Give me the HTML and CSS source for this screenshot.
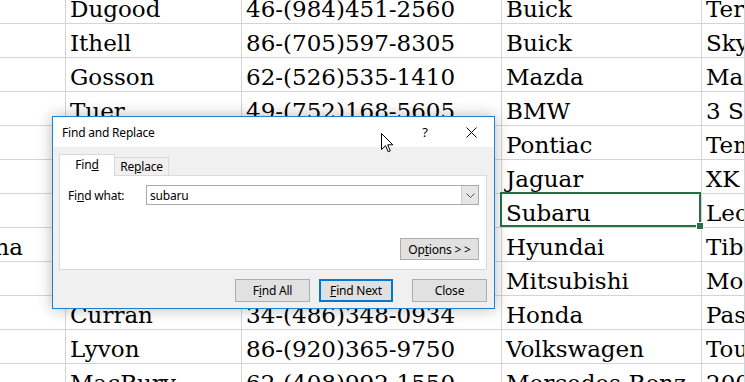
FILE: index.html
```html
<!DOCTYPE html>
<html lang="en">
<head>
  <meta charset="UTF-8" />
  <title>Find and Replace</title>
  <link rel="stylesheet" href="styles.css">
</head>
<body>
  <div class="sheet">
    <div class="row"><div class="cell"></div><div class="cell">Dugood</div><div class="cell">46-(984)451-2560</div><div class="cell">Buick</div><div class="cell">Terraza</div></div>
    <div class="row"><div class="cell"></div><div class="cell">Ithell</div><div class="cell">86-(705)597-8305</div><div class="cell">Buick</div><div class="cell">Skylark</div></div>
    <div class="row"><div class="cell"></div><div class="cell">Gosson</div><div class="cell">62-(526)535-1410</div><div class="cell">Mazda</div><div class="cell">Mazda6</div></div>
    <div class="row"><div class="cell"></div><div class="cell">Tuer</div><div class="cell">49-(752)168-5605</div><div class="cell">BMW</div><div class="cell">3 Series</div></div>
    <div class="row"><div class="cell"></div><div class="cell">Pinkney</div><div class="cell">55-(310)204-7781</div><div class="cell">Pontiac</div><div class="cell">Tempest</div></div>
    <div class="row"><div class="cell"></div><div class="cell">Aldin</div><div class="cell">7-(912)843-1127</div><div class="cell">Jaguar</div><div class="cell">XK</div></div>
    <div class="row"><div class="cell"></div><div class="cell">Bewick</div><div class="cell">63-(221)660-4390</div><div class="cell selected">Subaru</div><div class="cell">Leone</div></div>
    <div class="row"><div class="cell spill">Natasha</div><div class="cell">Ormerod</div><div class="cell">33-(418)275-0563</div><div class="cell">Hyundai</div><div class="cell">Tiburon</div></div>
    <div class="row"><div class="cell"></div><div class="cell">Kenward</div><div class="cell">86-(654)112-9078</div><div class="cell">Mitsubishi</div><div class="cell">Montero</div></div>
    <div class="row"><div class="cell"></div><div class="cell">Curran</div><div class="cell">34-(486)348-0934</div><div class="cell">Honda</div><div class="cell">Passport</div></div>
    <div class="row"><div class="cell"></div><div class="cell">Lyvon</div><div class="cell">86-(920)365-9750</div><div class="cell">Volkswagen</div><div class="cell">Touareg</div></div>
    <div class="row"><div class="cell"></div><div class="cell">MacBury</div><div class="cell">62-(408)992-1550</div><div class="cell">Mercedes-Benz</div><div class="cell">200</div></div>
  </div>

  <div class="dialog">
    <div class="dlg-title">
      <span>Find and Replace</span>
      <span class="cap-btn help">?</span>
      <span class="cap-btn close">
        <svg width="11" height="11" viewBox="0 0 11 11"><path d="M0.5 0.5 L10.5 10.5 M10.5 0.5 L0.5 10.5" stroke="#000" stroke-width="1"/></svg>
      </span>
    </div>
    <div class="dlg-body">
      <div class="tabs">
        <div class="tab active">Fin<u>d</u></div>
        <div class="tab">Re<u>p</u>lace</div>
      </div>
      <div class="panel">
        <div class="find-row">
          <label class="find-label">Fi<u>n</u>d what:</label>
          <div class="combo">
            <span class="combo-text">subaru</span>
            <span class="combo-btn">
              <svg width="9" height="5" viewBox="0 0 9 5"><path d="M0.5 0.5 L4.5 4.5 L8.5 0.5" fill="none" stroke="#555" stroke-width="1"/></svg>
            </span>
          </div>
        </div>
        <div class="options-row">
          <button class="btn options">Op<u>t</u>ions &gt; &gt;</button>
        </div>
      </div>
      <div class="actions">
        <button class="btn">F<u>i</u>nd All</button>
        <button class="btn default"><u>F</u>ind Next</button>
        <button class="btn close-btn">Close</button>
      </div>
    </div>
  </div>

  <svg class="cursor" width="13" height="20" viewBox="0 0 13 20">
    <path d="M0.5 0.5 L0.5 16.5 L4.5 12.7 L7.2 18.8 L9.3 17.9 L6.7 11.8 L11.8 11.8 Z" fill="#fff" stroke="#000" stroke-width="1" stroke-linejoin="round"/>
  </svg>
</body>
</html>
```

FILE: styles.css
```css
* { box-sizing: border-box; }
body {
  margin: 0;
  background: #fff;
  overflow: hidden;
  height: 382px;
  position: relative;
}

/* spreadsheet behind the dialog */
.sheet {
  margin-top: -10px;
  font-family: "DejaVu Serif", serif;
  font-size: 23px;
  color: #000;
}
.row {
  display: grid;
  grid-template-columns: 66px 176px 260px 200px 1fr;
  height: 34px;
}
.cell {
  position: relative;
  border-right: 1px solid #d4d4d4;
  border-bottom: 1px solid #d4d4d4;
  padding: 5px 0 0 4px;
  line-height: 28px;
  white-space: nowrap;
  overflow: hidden;
}
.cell.spill {
  display: flex;
  justify-content: flex-end;
  padding-right: 42px;
  border-right-color: transparent;
}
.cell.selected {
  overflow: visible;
}
.cell.selected::after {
  content: "";
  position: absolute;
  top: -2px;
  left: -2px;
  right: 0;
  bottom: 0;
  border: 2px solid #217346;
}
.cell.selected::before {
  content: "";
  position: absolute;
  right: -3px;
  bottom: -3px;
  width: 6px;
  height: 6px;
  background: #217346;
  border: 1px solid #fff;
  z-index: 2;
}

/* find and replace dialog */
.dialog {
  position: absolute;
  left: 52px;
  top: 116px;
  width: 443px;
  height: 193px;
  border: 1px solid #1883d7;
  background: #f0f0f0;
  box-shadow: 0 0 14px rgba(0, 0, 0, 0.28);
  font-family: "Noto Sans", sans-serif;
  font-size: 12px;
  letter-spacing: -0.2px;
  color: #000;
  display: flex;
  flex-direction: column;
}
.dlg-title {
  height: 30px;
  background: #fff;
  display: flex;
  align-items: center;
  padding-left: 9px;
}
.cap-btn {
  width: 46px;
  height: 30px;
  display: flex;
  align-items: center;
  justify-content: center;
}
.help {
  margin-left: auto;
  font-size: 13px;
}
.dlg-body {
  flex: 1;
  padding: 7px 7px 0 6px;
}
.tabs {
  display: flex;
  align-items: flex-end;
  height: 21px;
}
.tab {
  height: 18px;
  width: 55px;
  margin-left: -1px;
  border: 1px solid #d9d9d9;
  border-bottom: none;
  background: #f0f0f0;
  text-align: center;
  line-height: 17px;
}
.tab.active {
  position: relative;
  z-index: 1;
  margin-left: 0;
  width: 56px;
  height: 22px;
  margin-bottom: -1px;
  background: #fff;
  line-height: 20px;
}
.panel {
  height: 95px;
  width: 428px;
  background: #fff;
  border: 1px solid #d9d9d9;
  padding: 9px 7px 0 8px;
}
.find-row {
  display: flex;
  align-items: center;
  height: 20px;
}
.find-label {
  width: 78px;
}
.combo {
  flex: 1;
  height: 20px;
  border: 1px solid #a9a9a9;
  display: flex;
  align-items: center;
}
.combo-text {
  flex: 1;
  padding-left: 3px;
}
.combo-btn {
  width: 17px;
  height: 18px;
  background: #e5e5e5;
  border-left: 1px solid #cfcfcf;
  display: flex;
  align-items: center;
  justify-content: center;
}
.options-row {
  display: flex;
  justify-content: flex-end;
  margin-top: 33px;
}
.btn {
  font-family: "Noto Sans", sans-serif;
  font-size: 12px;
  letter-spacing: -0.2px;
  color: #000;
  background: #e1e1e1;
  border: 1px solid #adadad;
  height: 23px;
  width: 75px;
  padding: 0;
}
.options {
  width: 79px;
  height: 22px;
}
.actions {
  display: flex;
  justify-content: flex-end;
  gap: 9px;
  margin-top: 9px;
  margin-right: -7px;
  padding-right: 7px;
}
.btn.default {
  width: 74px;
  border: 2px solid #0078d7;
}
.btn.close-btn {
  margin-left: 10px;
}

.cursor {
  position: absolute;
  left: 381px;
  top: 133px;
}
```
